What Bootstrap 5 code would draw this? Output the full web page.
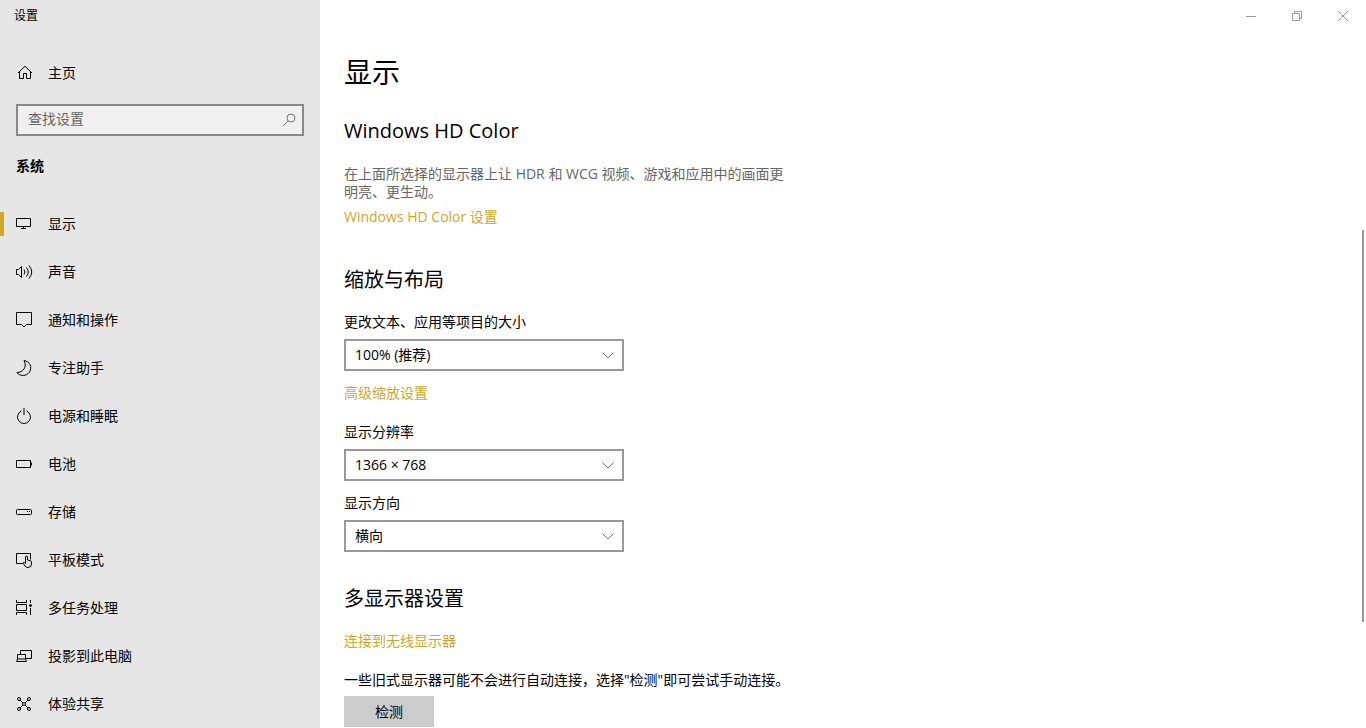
<!DOCTYPE html>
<html lang="zh-CN">
<head>
<meta charset="utf-8">
<meta name="viewport" content="width=device-width, initial-scale=1">
<title>设置</title>
<link href="https://cdn.jsdelivr.net/npm/bootstrap@5.3.0/dist/css/bootstrap.min.css" rel="stylesheet">
<style>
  body { font-family: "Open Sans", "Noto Sans CJK SC", sans-serif; font-size: 14px; line-height: 20px; color: #000; background: #fff; }
  svg { fill: none; stroke: currentColor; stroke-width: 1; display: block; }
  .sidebar { width: 320px; background: #e6e6e6; }
  .app-title { font-size: 12px; height: 32px; padding-left: 14px; }
  .side-link { height: 48px; padding: 0 16px; gap: 14px; color: #000; border-radius: 0; }
  .side-link:hover { color: #000; background: #dadada; }
  .side-link.active::before { content: ""; position: absolute; left: 0; top: 12px; width: 4px; height: 24px; background: #cfa728; }
  .home-link { margin-top: 17px; margin-bottom: 7px; }
  .search-box { margin: 0 16px; height: 32px; border: 2px solid #8a8a8a; background: #f0f0f0; padding: 0 6px 0 10px; }
  .search-box input { min-width: 0; border: 0; outline: 0; background: transparent; padding: 0 0 4px; height: 28px; }
  .search-box input::placeholder { color: #666; opacity: 1; }
  .search-box button { color: #777; }
  .section-name { font-size: 14px; line-height: 20px; margin: 20px 16px 24px; }
  .win-btn { width: 46px; height: 32px; color: #999; background: transparent; border: 0; }
  .content { padding: 22px 24px 0; }
  .content section + section { margin-top: 39px; }
  .content .field-section + section { margin-top: 33px; }
  h1 { font-size: 28px; line-height: 36px; font-weight: 400; margin: 0 0 27px; }
  h2 { font-size: 20px; line-height: 28px; font-weight: 400; margin: 0 0 18px; }
  .intro { max-width: 448px; color: #666; line-height: 18px; margin: 20px 0 6px; }
  .accent { color: #cfa728; text-decoration: none; }
  .accent:hover { color: #a5851f; }
  .spaced { margin-bottom: 19px; }
  .field { width: 280px; margin-bottom: 12px; }
  .field label { display: block; margin-bottom: 7px; }
  .field select { width: 100%; height: 32px; border: 2px solid #999; border-radius: 0; padding: 0 32px 0 9px; color: #000; font-size: 14px; line-height: 20px; background: #fff url("data:image/svg+xml,%3Csvg xmlns='http://www.w3.org/2000/svg' viewBox='0 0 12 7'%3E%3Cpath d='M.5.5 6 6 11.5.5' fill='none' stroke='%23777'/%3E%3C/svg%3E") no-repeat right 8px center / 12px 7px; }
  .detect { width: 90px; height: 31px; border: 0; background: #ccc; margin-top: 6px; }
  .scroll-thumb { right: 2px; top: 31.6%; width: 2px; height: 53.8%; background: #999; }
</style>
</head>
<body>
<div class="d-flex vh-100 overflow-hidden">
  <aside class="sidebar d-flex flex-column flex-shrink-0">
    <div class="app-title d-flex align-items-center">设置</div>
    <a href="#" class="side-link home-link nav-link d-flex align-items-center">
      <svg width="18" height="18" viewBox="0 0 18 18"><path d="M2 9 9 2.200 16 9M3.500 7.500v7h4v-5h3v5h4v-7"/></svg>主页</a>
    <form class="search-box d-flex align-items-center" role="search">
      <input type="search" class="flex-grow-1" placeholder="查找设置" aria-label="查找设置">
      <button type="button" class="btn p-0 border-0" aria-label="搜索"><svg width="14" height="14" viewBox="0 0 14 14"><circle cx="9" cy="5" r="4"/><path d="M6.200 7.800 1 13"/></svg></button>
    </form>
    <h2 class="section-name fw-bold">系统</h2>
    <nav class="nav flex-column flex-nowrap" aria-label="系统">
      <a href="#" class="side-link nav-link active position-relative d-flex align-items-center" aria-current="page">
        <svg width="18" height="18" viewBox="0 0 18 18"><path d="M.5 3.500h14v8H.5zM7.500 11.500v2M5 13.500h5"/></svg>显示</a>
      <a href="#" class="side-link nav-link d-flex align-items-center">
        <svg width="18" height="18" viewBox="0 0 18 18"><path d="M.5 6.500H2.500L5.500 3.500v11l-3-3H.5zM8 6.500q1.800 2.500 0 5M10.500 4.500q3.500 4.500 0 9M13 2.500q5.500 6.500 0 13"/></svg>声音</a>
      <a href="#" class="side-link nav-link d-flex align-items-center">
        <svg width="18" height="18" viewBox="0 0 18 18"><path d="M.5 1.500h15v12h-5L8 16l-2.500-2.500h-5z"/></svg>通知和操作</a>
      <a href="#" class="side-link nav-link d-flex align-items-center">
        <svg width="18" height="18" viewBox="0 0 18 18"><path d="M8 1.500C14 2.500 16.500 8 13.500 13 10.500 17.500 4 17.500.8 13.500 7 13.500 11.500 8 8 1.500z"/></svg>专注助手</a>
      <a href="#" class="side-link nav-link d-flex align-items-center">
        <svg width="18" height="18" viewBox="0 0 18 18"><path d="M5.500 4a6.500 6.500 0 1 0 5 0M8 1v7"/></svg>电源和睡眠</a>
      <a href="#" class="side-link nav-link d-flex align-items-center">
        <svg width="18" height="18" viewBox="0 0 18 18"><path d="M.5 5.500h14v7H.5zM15.500 7.500v3"/></svg>电池</a>
      <a href="#" class="side-link nav-link d-flex align-items-center">
        <svg width="18" height="18" viewBox="0 0 18 18"><rect x=".5" y="6.500" width="15" height="5" rx="1"/><path d="M11 8.500h1M13 8.500h1"/></svg>存储</a>
      <a href="#" class="side-link nav-link d-flex align-items-center">
        <svg width="18" height="18" viewBox="0 0 18 18"><path d="M7 12.500H.5v-10h14v6M9.500 12V6q0-1 1-1t1 1V9l3 .7q1 .3 1 1.300v2q0 3.500-3.500 3.500-2 0-3-1.500L7.200 12.300q0-1.300 1.200-.8l1.100 1.200"/></svg>平板模式</a>
      <a href="#" class="side-link nav-link d-flex align-items-center">
        <svg width="18" height="18" viewBox="0 0 18 18"><path d="M.5 1v2.500h10V1M.5 5.500h10v6H.5zM.5 16v-2.500h10V16M14.500 1v3M14.500 9v7"/><circle cx="14.500" cy="6.500" r="1" fill="currentColor"/></svg>多任务处理</a>
      <a href="#" class="side-link nav-link d-flex align-items-center">
        <svg width="18" height="18" viewBox="0 0 18 18"><path d="M4.500 7V3.500h11v8H10M1.500 12V7.500h8V12M1.500 12l-1 2.500h10l-1-2.500z"/></svg>投影到此电脑</a>
      <a href="#" class="side-link nav-link d-flex align-items-center">
        <svg width="18" height="18" viewBox="0 0 18 18"><circle cx="3" cy="4" r="1.500"/><circle cx="13" cy="4" r="1.500"/><circle cx="3" cy="14" r="1.500"/><circle cx="13" cy="14" r="1.500"/><circle cx="8" cy="9" r="1.500"/><path d="M4 5l3 3M12 5 9 8M4 13l3-3M12 13l-3-3"/></svg>体验共享</a>
    </nav>
  </aside>

  <main class="flex-grow-1 position-relative">
    <div class="d-flex justify-content-end">
      <button type="button" class="win-btn d-flex align-items-center justify-content-center" aria-label="最小化"><svg width="10" height="10" viewBox="0 0 10 10"><path d="M0 5.500h10"/></svg></button>
      <button type="button" class="win-btn d-flex align-items-center justify-content-center" aria-label="还原"><svg width="10" height="10" viewBox="0 0 10 10"><path d="M.5 2.500h7v7h-7zM2.500 2.500v-2h7v7h-2"/></svg></button>
      <button type="button" class="win-btn d-flex align-items-center justify-content-center" aria-label="关闭"><svg width="10" height="10" viewBox="0 0 10 10"><path d="M0 0l10 10M10 0 0 10"/></svg></button>
    </div>
    <div class="content">
      <h1>显示</h1>
      <section>
        <h2>Windows HD Color</h2>
        <p class="intro">在上面所选择的显示器上让 HDR 和 WCG 视频、游戏和应用中的画面更明亮、更生动。</p>
        <a href="#" class="accent d-block">Windows HD Color 设置</a>
      </section>
      <section class="field-section">
        <h2>缩放与布局</h2>
        <div class="field">
          <label for="scale">更改文本、应用等项目的大小</label>
          <select id="scale" class="form-select"><option>100% (推荐)</option></select>
        </div>
        <a href="#" class="accent spaced d-block">高级缩放设置</a>
        <div class="field">
          <label for="resolution">显示分辨率</label>
          <select id="resolution" class="form-select"><option>1366 × 768</option></select>
        </div>
        <div class="field mb-0">
          <label for="orientation">显示方向</label>
          <select id="orientation" class="form-select"><option>横向</option></select>
        </div>
      </section>
      <section>
        <h2>多显示器设置</h2>
        <a href="#" class="accent spaced d-block">连接到无线显示器</a>
        <p class="m-0">一些旧式显示器可能不会进行自动连接，选择"检测"即可尝试手动连接。</p>
        <button type="button" class="detect">检测</button>
      </section>
    </div>
    <div class="scroll-thumb position-absolute" aria-hidden="true"></div>
  </main>
</div>
<script src="https://cdn.jsdelivr.net/npm/bootstrap@5.3.0/dist/js/bootstrap.bundle.min.js"></script>
</body>
</html>
